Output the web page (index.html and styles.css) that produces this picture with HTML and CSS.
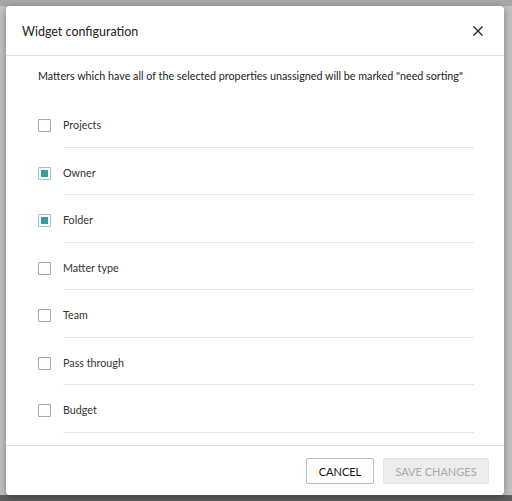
FILE: index.html
```html
<!DOCTYPE html>
<html>
<head>
<meta charset="utf-8">
<link rel="stylesheet" href="styles.css">
</head>
<body>
<div class="dialog">
  <div class="header">
    <span class="title">Widget configuration</span>
    <svg class="close" width="10" height="10" viewBox="0 0 10 10"><path d="M0.5 0.5L9.5 9.5M9.5 0.5L0.5 9.5" stroke="#222" stroke-width="1.3" fill="none"/></svg>
  </div>
  <div class="body">
    <p class="desc">Matters which have all of the selected properties unassigned will be marked "need sorting"</p>
    <ul class="list">
      <li class="row"><span class="cb"></span><span class="label">Projects</span></li>
      <li class="row"><span class="cb checked"></span><span class="label">Owner</span></li>
      <li class="row"><span class="cb checked"></span><span class="label">Folder</span></li>
      <li class="row"><span class="cb"></span><span class="label">Matter type</span></li>
      <li class="row"><span class="cb"></span><span class="label">Team</span></li>
      <li class="row"><span class="cb"></span><span class="label">Pass through</span></li>
      <li class="row"><span class="cb"></span><span class="label">Budget</span></li>
    </ul>
  </div>
  <div class="footer">
    <button class="btn cancel">CANCEL</button>
    <button class="btn save">SAVE CHANGES</button>
  </div>
</div>
</body>
</html>
```
FILE: styles.css
```css
html, body {
  margin: 0;
  padding: 0;
  height: 100%;
  overflow: hidden;
}
body {
  font-family: Lato, "Liberation Sans", sans-serif;
  background: linear-gradient(to bottom, #a8a8a8 0, #a8a8a8 6px, #c2c2c2 6px, #c2c2c2 495px, #5f5f5f 495px);
  padding: 6px 0 0 6px;
  box-sizing: border-box;
}
.dialog {
  width: 498px;
  height: 489px;
  background: #fff;
  border-radius: 4px;
  box-shadow: 0 2px 8px rgba(0,0,0,0.35);
  display: flex;
  flex-direction: column;
}
.header {
  height: 49px;
  border-bottom: 1px solid #e2e2e2;
  display: flex;
  align-items: center;
  justify-content: space-between;
  padding: 0 21px 0 16px;
  flex: none;
}
.title {
  font-size: 12.5px;
  color: #222;
  padding-top: 1px;
}
.close {
  display: block;
  margin-top: 1px;
}
.body {
  flex: 1;
  padding: 12px 30px 0 32px;
}
.desc {
  margin: 0 0 17px 0;
  font-size: 10.75px;
  line-height: 16px;
  color: #222;
}
.list {
  list-style: none;
  margin: 0;
  padding: 0;
}
.row {
  display: flex;
  align-items: flex-start;
  height: 47.5px;
}
.cb {
  flex: none;
  width: 11px;
  height: 11px;
  border: 1px solid #a6a6a6;
  border-radius: 1px;
  margin-top: 18px;
  margin-right: 12px;
  box-sizing: content-box;
  display: flex;
  align-items: center;
  justify-content: center;
}
.cb.checked {
  border-color: #93c9c9;
}
.cb.checked::after {
  content: "";
  width: 7px;
  height: 7px;
  background: #3a9b9d;
}
.label {
  flex: 1;
  height: 46.5px;
  box-sizing: border-box;
  padding-top: 16px;
  font-size: 10.75px;
  line-height: 16px;
  color: #333;
  border-bottom: 1px solid #e6e6e6;
}
.footer {
  flex: none;
  border-top: 1px solid #e2e2e2;
  padding: 12px 15px 11px 0;
  display: flex;
  justify-content: flex-end;
  gap: 9px;
}
.btn {
  height: 26px;
  font-family: Lato, "Liberation Sans", sans-serif;
  font-size: 11px;
  border-radius: 2px;
  padding: 0;
  box-sizing: border-box;
}
.cancel {
  width: 68px;
  background: #fff;
  border: 1px solid #bdbdbd;
  color: #111;
}
.save {
  width: 106px;
  background: #ececec;
  border: 1px solid #e4e4e4;
  color: #aaaaaa;
}
```
